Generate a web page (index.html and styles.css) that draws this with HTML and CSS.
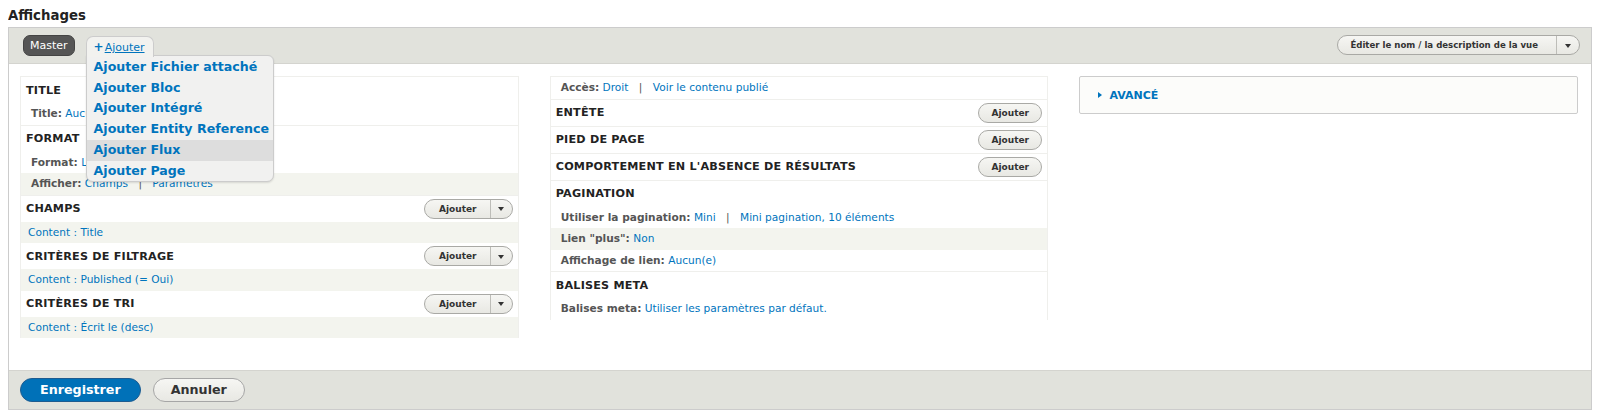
FILE: index.html
```html
<!DOCTYPE html>
<html lang="fr">
<head>
<meta charset="utf-8">
<title>Affichages</title>
<link rel="stylesheet" href="styles.css">
</head>
<body>
<h1 class="page-title">Affichages</h1>
<div class="display-box">
  <div class="top-bar">
    <div class="tabs">
      <span class="tab tab-master">Master</span>
      <div class="add-wrap">
        <span class="tab tab-add"><span class="plus">+</span><a href="#">Ajouter</a></span>
        <ul class="add-menu">
          <li>Ajouter Fichier attaché</li>
          <li>Ajouter Bloc</li>
          <li>Ajouter Intégré</li>
          <li>Ajouter Entity Reference</li>
          <li class="hover">Ajouter Flux</li>
          <li>Ajouter Page</li>
        </ul>
      </div>
    </div>
    <div class="split-btn split-top">
      <span class="split-main">Éditer le nom / la description de la vue</span>
      <span class="split-arrow"><span class="caret"></span></span>
    </div>
  </div>

  <div class="columns">
    <div class="col col-box">
      <div class="bucket">
        <div class="bucket-head"><h3>Title</h3></div>
        <div class="row"><span class="label">Title:</span> <a href="#">Aucun</a></div>
      </div>
      <div class="bucket">
        <div class="bucket-head"><h3>Format</h3></div>
        <div class="row"><span class="label">Format:</span> <a href="#">Liste HTML</a> <span class="sep">|</span> <a href="#">Paramètres</a></div>
        <div class="row alt"><span class="label">Afficher:</span> <a href="#">Champs</a> <span class="sep">|</span> <a href="#">Paramètres</a></div>
      </div>
      <div class="bucket noline">
        <div class="bucket-head"><h3>Champs</h3>
          <div class="split-btn"><span class="split-main">Ajouter</span><span class="split-arrow"><span class="caret"></span></span></div>
        </div>
        <div class="row alt plain"><a href="#">Content : Title</a></div>
      </div>
      <div class="bucket noline">
        <div class="bucket-head"><h3>Critères de filtrage</h3>
          <div class="split-btn"><span class="split-main">Ajouter</span><span class="split-arrow"><span class="caret"></span></span></div>
        </div>
        <div class="row alt plain"><a href="#">Content : Published (= Oui)</a></div>
      </div>
      <div class="bucket noline">
        <div class="bucket-head"><h3>Critères de tri</h3>
          <div class="split-btn"><span class="split-main">Ajouter</span><span class="split-arrow"><span class="caret"></span></span></div>
        </div>
        <div class="row alt plain"><a href="#">Content : Écrit le (desc)</a></div>
      </div>
    </div>

    <div class="col col-box">
      <div class="bucket">
        <div class="row"><span class="label">Accès:</span> <a href="#">Droit</a> <span class="sep">|</span> <a href="#">Voir le contenu publié</a></div>
      </div>
      <div class="bucket">
        <div class="bucket-head"><h3>Entête</h3><span class="btn-small">Ajouter</span></div>
      </div>
      <div class="bucket">
        <div class="bucket-head"><h3>Pied de page</h3><span class="btn-small">Ajouter</span></div>
      </div>
      <div class="bucket">
        <div class="bucket-head"><h3>Comportement en l'absence de résultats</h3><span class="btn-small">Ajouter</span></div>
      </div>
      <div class="bucket">
        <div class="bucket-head"><h3>Pagination</h3></div>
        <div class="row"><span class="label">Utiliser la pagination:</span> <a href="#">Mini</a> <span class="sep">|</span> <a href="#">Mini pagination, 10 éléments</a></div>
        <div class="row alt"><span class="label">Lien "plus":</span> <a href="#">Non</a></div>
        <div class="row"><span class="label">Affichage de lien:</span> <a href="#">Aucun(e)</a></div>
      </div>
      <div class="bucket noline">
        <div class="bucket-head"><h3>Balises meta</h3></div>
        <div class="row"><span class="label">Balises meta:</span> <a href="#">Utiliser les paramètres par défaut.</a></div>
      </div>
    </div>

    <div class="col">
      <div class="advanced"><span class="tri"></span>Avancé</div>
    </div>
  </div>

  <div class="bottom-bar">
    <span class="btn btn-primary">Enregistrer</span>
    <span class="btn btn-cancel">Annuler</span>
  </div>
</div>
</body>
</html>
```

FILE: styles.css
```css
* { box-sizing: border-box; }
html, body { background: #fff; }
body {
  margin: 8px;
  font-family: "DejaVu Sans", "Liberation Sans", sans-serif;
  font-size: 10.6px;
  color: #333;
}
a { color: #0074bd; text-decoration: none; }

.page-title {
  margin: 0 0 4px;
  font-size: 13.3px;
  line-height: 14px;
  font-weight: bold;
  color: #222;
  padding-top: 1px;
}

.display-box {
  border: 1px solid #ccc;
  background: #fff;
}

.top-bar {
  height: 36px;
  background: #e1e2dc;
  border-bottom: 1px solid #d4d4cf;
  display: flex;
  justify-content: space-between;
  align-items: flex-start;
  padding: 7px 11px 0 14px;
}
.tabs { display: flex; gap: 11px; }
.tab {
  display: inline-block;
  font-size: 11px;
  line-height: 20px;
  height: 21px;
  border-radius: 7px;
  padding: 0 6px;
}
.tab-master {
  background: #555;
  color: #fff;
  border: 1px solid #444;
}
.add-wrap { position: relative; }
.tab-add {
  background: #f2f2ef;
  border: 1px solid #ccc;
  border-bottom: none;
  border-radius: 7px 7px 0 0;
  height: 21px;
  padding: 0 8px 0 7px;
  margin-top: 1px;
  position: relative;
  z-index: 3;
}
.tab-add a { text-decoration: underline; }
.plus { color: #0074bd; font-weight: bold; margin-right: 1px; font-size: 12px; }
.add-menu {
  position: absolute;
  left: 0;
  top: 20px;
  margin: 0;
  padding: 1px 0 0;
  list-style: none;
  width: 188px;
  background: #f1f1f0;
  border: 1px solid #ccc;
  border-radius: 0 6px 7px 7px;
  box-shadow: 0 1px 2px rgba(0,0,0,0.12);
  z-index: 2;
}
.add-menu li {
  font-size: 12.6px;
  font-weight: bold;
  color: #0074bd;
  line-height: 20.7px;
  padding: 0 7px;
  white-space: nowrap;
}
.add-menu li.hover { background: #ddd; }

.split-btn {
  display: inline-flex;
  align-items: stretch;
  height: 20px;
  border: 1px solid #a9a9a5;
  border-radius: 10px;
  background: linear-gradient(#f6f6f3, #e8e8e3);
  font-weight: bold;
  font-size: 9px;
  color: #333;
}
.split-main {
  line-height: 18px;
  padding: 0 13px 0 14px;
}
.split-arrow {
  width: 22px;
  border-left: 1px solid #bdbdb8;
  display: flex;
  align-items: center;
  justify-content: center;
}
.caret {
  width: 0; height: 0;
  border-left: 3px solid transparent;
  border-right: 3px solid transparent;
  border-top: 4px solid #333;
  margin-top: 1px;
}
.split-top .split-main { padding: 0 18px 0 12px; font-size: 8.6px; }
.split-top .split-arrow { width: 23px; }

.columns {
  display: grid;
  grid-template-columns: 1fr 1fr 1fr;
  column-gap: 2%;
  padding: 12px 13px 20px 11px;
  align-items: start;
  min-height: 306px;
}
.col-box {
  border: 1px solid #efefec;
  border-bottom: none;
}
.bucket { border-bottom: 1px solid #efefec; }
.bucket.noline { border-bottom: none; }
.bucket-head {
  display: flex;
  align-items: center;
  justify-content: space-between;
  min-height: 26px;
  padding: 0 5px 0 5px;
}
.bucket-head h3 {
  margin: 0;
  font-size: 11.2px;
  letter-spacing: 0.2px;
  text-transform: uppercase;
  color: #222;
  font-weight: bold;
}
.row {
  line-height: 21.5px;
  padding: 0 10px;
  white-space: nowrap;
}
.row.plain { padding-left: 7px; }
.row.alt { background: #f3f4ee; }
.label { font-weight: bold; color: #555; }
.sep { color: #555; margin: 0 7px; }

.btn-small {
  display: inline-block;
  height: 20px;
  width: 64px;
  text-align: center;
  line-height: 18px;
  border: 1px solid #a9a9a5;
  border-radius: 10px;
  background: linear-gradient(#f6f6f3, #e8e8e3);
  font-weight: bold;
  font-size: 9px;
  color: #333;
}

.advanced {
  border: 1px solid #ccc;
  border-radius: 2px;
  background: #fcfcfa;
  height: 38px;
  padding: 0 18px;
  display: flex;
  align-items: center;
  font-weight: bold;
  font-size: 11px;
  color: #0074bd;
  text-transform: uppercase;
}
.tri {
  width: 0; height: 0;
  border-top: 3px solid transparent;
  border-bottom: 3px solid transparent;
  border-left: 4px solid #0074bd;
  margin-right: 7px;
}

.bottom-bar {
  background: #e1e2dc;
  border-top: 1px solid #d4d4cf;
  height: 39px;
  display: flex;
  align-items: center;
  gap: 12px;
  padding: 0 11px;
}
.btn {
  display: inline-block;
  height: 24px;
  line-height: 22px;
  border-radius: 12px;
  border: 1px solid #a6a6a6;
  background: linear-gradient(#f6f6f3, #e8e8e3);
  font-weight: bold;
  font-size: 12.7px;
  color: #333;
  padding: 0 18px;
}
.btn-cancel { padding: 0 17px; }
.btn-primary {
  background: #0071b8;
  border-color: #1e5c90;
  color: #fff;
  padding: 0 19px;
}
```
